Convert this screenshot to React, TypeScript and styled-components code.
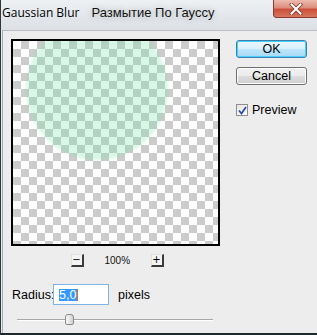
import React from "react";
import styled, { createGlobalStyle } from "styled-components";

const Global = createGlobalStyle`
  html, body { margin: 0; padding: 0; background: #ededed; }
  body { font-family: "Liberation Sans", Arial, sans-serif; }
`;

const Window = styled.div`
  width: 317px;
  height: 335px;
  overflow: hidden;
  display: flex;
  flex-direction: column;
  background: #e7eaee;
  border-left: 1px solid #2a3a3c;
  border-bottom: 2px solid #1d2a2c;
  box-sizing: border-box;
`;

const TitleBar = styled.div`
  height: 30px;
  flex: none;
  display: flex;
  align-items: flex-start;
  background: linear-gradient(180deg, #eef1f4 0%, #e2e6ea 60%, #dde1e5 100%);
  position: relative;
`;

const TitleEn = styled.span`
  font-family: "Open Sans", "Noto Sans", sans-serif;
  font-size: 12px;
  color: #000;
  margin: 5px 0 0 1px;
  line-height: 16px;
`;

const TitleRu = styled.span`
  font-family: "Liberation Sans", Arial, sans-serif;
  font-size: 13px;
  color: #111;
  margin: 5px 0 0 12px;
  line-height: 16px;
  text-shadow: 0 0 6px rgba(60, 60, 60, 0.35), 0 0 2px rgba(255, 255, 255, 0.9);
`;

const CloseButton = styled.div`
  position: absolute;
  right: -2px;
  top: 0;
  width: 46px;
  height: 18px;
  box-sizing: border-box;
  border: 1px solid #8a3a30;
  border-top: none;
  border-radius: 0 0 4px 4px;
  background: linear-gradient(180deg, #eebbb0 0%, #dc8e7c 45%, #cb503c 55%, #d9765e 100%);
  display: flex;
  align-items: center;
  justify-content: center;
`;

const Client = styled.div`
  flex: 1;
  margin-left: 1px;
  border-top: 1px solid #b9bcc0;
  border-left: 1px solid #a8abaf;
  background: #ededed;
  padding: 8px 0 0 8px;
  display: flex;
  flex-direction: column;
`;

const TopRow = styled.div`
  display: flex;
  gap: 16px;
`;

const LeftCol = styled.div`
  display: flex;
  flex-direction: column;
  align-items: center;
`;

const Preview = styled.div`
  width: 209px;
  height: 207px;
  box-sizing: border-box;
  border: 2px solid #000;
  position: relative;
  overflow: hidden;
  background: repeating-conic-gradient(#cccccc 0 25%, #ffffff 0 50%) 0 0 / 16px 16px;
`;

const Blob = styled.div`
  position: absolute;
  left: 13px;
  top: -23px;
  width: 142px;
  height: 142px;
  border-radius: 50%;
  background: rgba(118, 228, 168, 0.28);
  filter: blur(1.5px);
`;

const ZoomRow = styled.div`
  margin-top: 8px;
  height: 13px;
  display: flex;
  align-items: center;
  gap: 21px;
  margin-left: 3px;
`;

const ZoomButton = styled.div`
  width: 13px;
  height: 13px;
  box-sizing: border-box;
  background: #f3f3f3;
  border-top: 1px solid #e0e0e0;
  border-left: 1px solid #e0e0e0;
  border-right: 2px solid #3a3a3a;
  border-bottom: 2px solid #3a3a3a;
  display: flex;
  align-items: center;
  justify-content: center;
  font-family: "DejaVu Sans", sans-serif;
  font-size: 10px;
  line-height: 1;
  color: #000;
`;

const ZoomLabel = styled.span`
  font-family: "Liberation Sans", Arial, sans-serif;
  font-size: 10px;
  width: 25px;
  text-align: center;
  color: #111;
`;

const RightCol = styled.div`
  display: flex;
  flex-direction: column;
  padding-top: 1px;
`;

const Button = styled.div<{ $default?: boolean }>`
  width: 71px;
  height: 18px;
  box-sizing: border-box;
  border-radius: 3px;
  border: 1px solid ${(p) => (p.$default ? "#3c7fb1" : "#707070")};
  background: ${(p) =>
    p.$default
      ? "linear-gradient(180deg, #eaf6fd 0%, #d9f0fc 50%, #bee6fd 51%, #a7d9f5 100%)"
      : "linear-gradient(180deg, #f2f2f2 0%, #ebebeb 50%, #dddddd 51%, #cfcfcf 100%)"};
  box-shadow: inset 0 0 0 1px ${(p) => (p.$default ? "#48d0f8" : "#fcfcfc")};
  display: flex;
  align-items: center;
  justify-content: center;
  font-family: "Liberation Sans", Arial, sans-serif;
  font-size: 12.5px;
  color: #000;
  & + & {
    margin-top: 9px;
  }
`;

const CheckRow = styled.label`
  margin-top: 18px;
  display: flex;
  align-items: center;
  gap: 4px;
  font-family: "Liberation Sans", Arial, sans-serif;
  font-size: 12.5px;
  color: #000;
`;

const CheckBox = styled.div`
  width: 12px;
  height: 12px;
  box-sizing: border-box;
  border: 1px solid #8f8f8f;
  background: linear-gradient(135deg, #e6e6e6 0%, #ffffff 100%);
  display: flex;
  align-items: center;
  justify-content: center;
`;

const RadiusRow = styled.div`
  margin-top: 17px;
  display: flex;
  align-items: center;
  font-family: "Liberation Sans", Arial, sans-serif;
  font-size: 12.5px;
  color: #000;
`;

const RadiusLabel = styled.span`
  margin-left: 1px;
  width: 41px;
`;

const Input = styled.div`
  width: 56px;
  height: 21px;
  box-sizing: border-box;
  border: 1px solid #7eb4ea;
  background: #fff;
  display: flex;
  align-items: center;
  padding-left: 5px;
`;

const Selected = styled.span`
  background: #3399ff;
  color: #fff;
  line-height: 12px;
  height: 12px;
  padding: 0 1px 0 0;
  border-right: 1px solid #e07000;
`;

const Units = styled.span`
  margin-left: 9px;
`;

const SliderRow = styled.div`
  margin-top: 10px;
  margin-left: 6px;
  width: 196px;
  height: 11px;
  position: relative;
  display: flex;
  align-items: center;
`;

const Track = styled.div`
  width: 100%;
  height: 2px;
  box-sizing: border-box;
  border-top: 1px solid #a8a8a8;
  border-bottom: 1px solid #ffffff;
  margin-top: -1px;
`;

const Thumb = styled.div`
  position: absolute;
  left: 48px;
  top: -1px;
  width: 9px;
  height: 11px;
  box-sizing: border-box;
  border: 1px solid #8a8a8a;
  border-radius: 3px 3px 2px 2px;
  background: linear-gradient(90deg, #f6f6f6 0%, #e6e6e6 50%, #cfcfcf 100%);
`;

export default function App() {
  return (
    <>
      <Global />
      <Window>
        <TitleBar>
          <TitleEn>Gaussian Blur</TitleEn>
          <TitleRu>Размытие По Гауссу</TitleRu>
          <CloseButton>
            <svg width="14" height="12" viewBox="0 0 14 12">
              <path
                d="M2.5 1.5 L11.5 10.5 M11.5 1.5 L2.5 10.5"
                stroke="#7a3a30"
                strokeWidth="3.6"
                strokeLinecap="square"
              />
              <path
                d="M2.5 1.5 L11.5 10.5 M11.5 1.5 L2.5 10.5"
                stroke="#ffffff"
                strokeWidth="2"
                strokeLinecap="square"
              />
            </svg>
          </CloseButton>
        </TitleBar>
        <Client>
          <TopRow>
            <LeftCol>
              <Preview>
                <Blob />
              </Preview>
              <ZoomRow>
                <ZoomButton>−</ZoomButton>
                <ZoomLabel>100%</ZoomLabel>
                <ZoomButton>+</ZoomButton>
              </ZoomRow>
            </LeftCol>
            <RightCol>
              <Button $default>OK</Button>
              <Button>Cancel</Button>
              <CheckRow>
                <CheckBox>
                  <svg width="9" height="9" viewBox="0 0 9 9">
                    <path
                      d="M1 4.5 L3.5 7.5 L8 1"
                      fill="none"
                      stroke="#2b4fa8"
                      strokeWidth="1.8"
                    />
                  </svg>
                </CheckBox>
                Preview
              </CheckRow>
            </RightCol>
          </TopRow>
          <RadiusRow>
            <RadiusLabel>Radius:</RadiusLabel>
            <Input>
              <Selected>5,0</Selected>
            </Input>
            <Units>pixels</Units>
          </RadiusRow>
          <SliderRow>
            <Track />
            <Thumb />
          </SliderRow>
        </Client>
      </Window>
    </>
  );
}
